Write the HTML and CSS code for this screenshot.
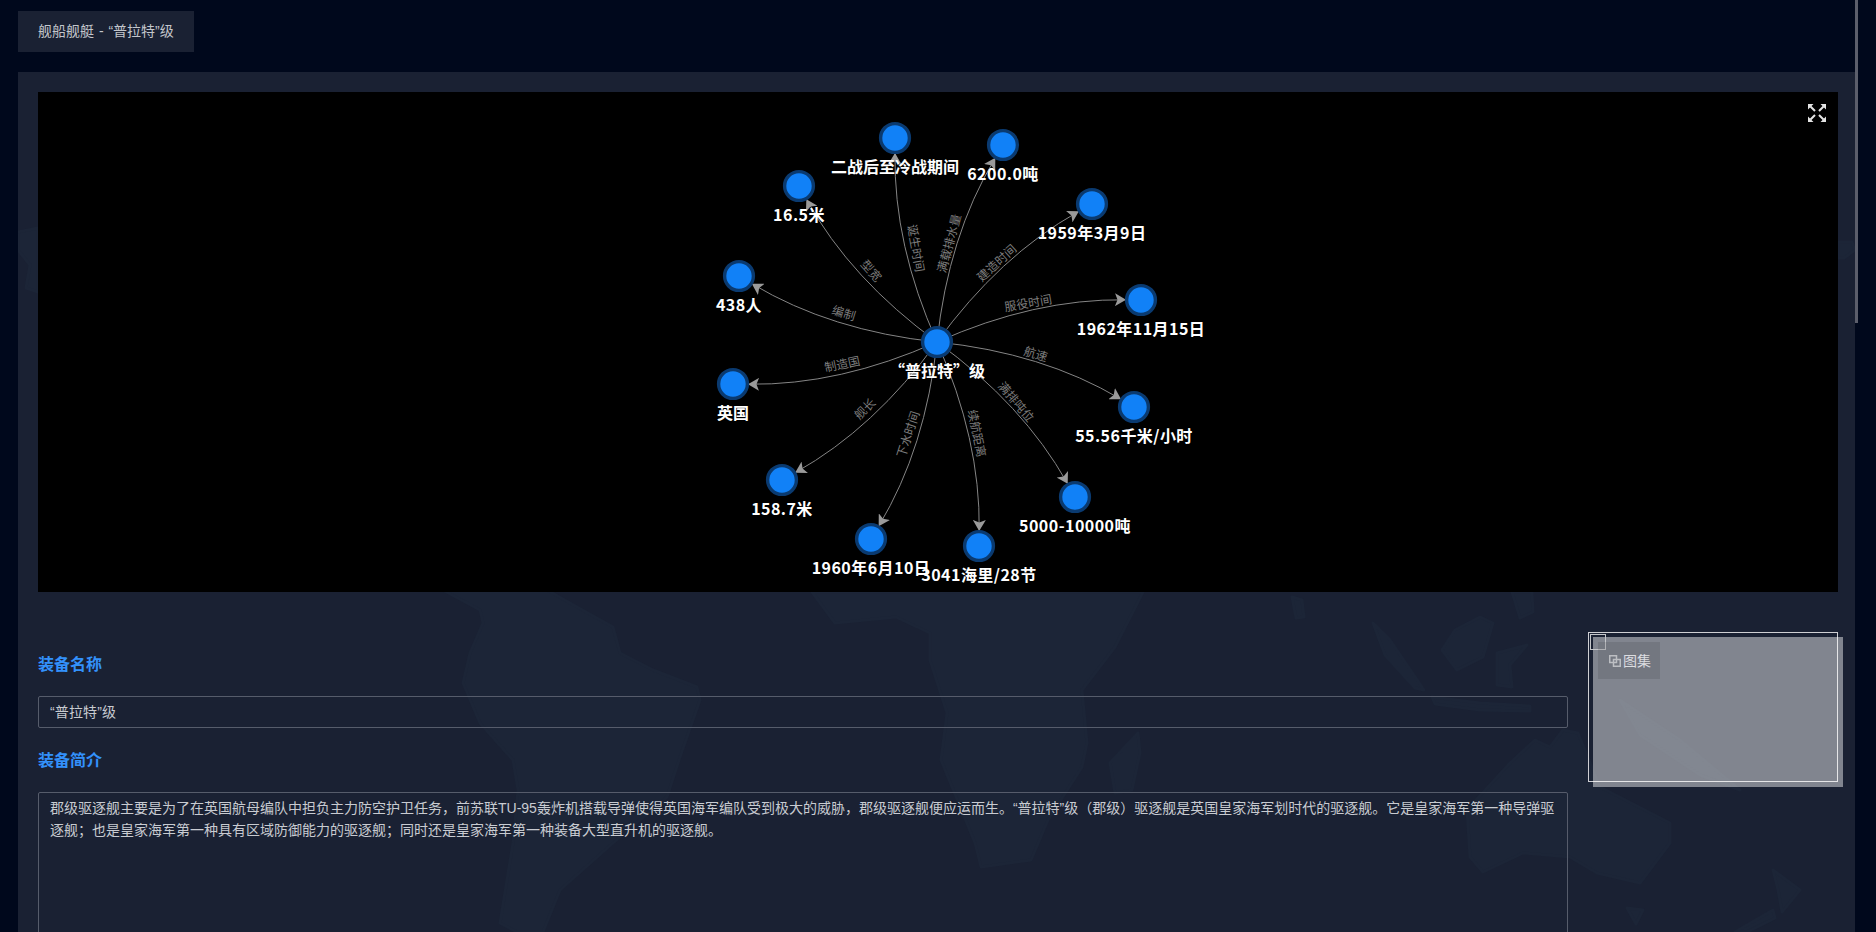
FILE: index.html
```html
<!DOCTYPE html>
<html lang="zh-CN">
<head>
<meta charset="utf-8">
<title>舰船舰艇 - “普拉特”级</title>
<link rel="stylesheet" href="styles.css">
</head>
<body>
<div class="page">
  <nav class="tabs"><div class="tab">舰船舰艇 - “普拉特”级</div></nav>
  <main class="panel">
    <svg class="worldmap" viewBox="0 0 1837 860" aria-hidden="true">
      <g transform="translate(-18 -72)">
        <path d="M443 590L480 610 483 623 470 653 463 683 480 723 513 760 518 790 513 843 500 923 517 932 543 932 560 890 613 843 667 797 680 757 700 700 697 687 653 670 620 653 613 627 577 607 547 590Z"/>
        <path d="M812 592L835 623 896 617 930 633 930 660 947 713 941 760 975 843 981 867 1031 860 1048 820 1082 767 1087 743 1082 690 1115 647 1143 592Z"/>
        <path d="M1138 733L1110 763 1115 793 1132 790 1140 753Z"/>
        <path d="M1292 597L1302 600 1304 617 1296 618Z"/>
        <path d="M1373 623L1390 640 1424 690 1415 688 1385 655Z"/>
        <path d="M1480 617L1493 623 1483 657 1457 670 1442 650 1455 630Z"/>
        <path d="M1512 592L1532 592 1533 612 1520 618Z"/>
        <path d="M1497 653L1527 645 1510 665 1512 687 1497 685Z"/>
        <path d="M1432 697L1480 703 1530 706 1530 711 1480 710 1435 704Z"/>
        <path d="M1467 810L1510 763 1535 740 1550 747 1563 730 1578 733 1600 787 1670 823 1670 843 1640 883 1597 873 1570 857 1523 853 1483 872 1470 857Z"/>
        <path d="M1627 908L1643 910 1636 924Z"/>
        <path d="M1773 870L1800 890 1782 912 1778 890Z"/>
        <path d="M1773 910L1775 918 1747 932 1735 932Z"/>
        <path d="M1620 700L1680 740 1740 790 1700 775 1640 735Z"/>
        <path d="M18 232L38 228 38 292 26 288 30 265 18 250Z"/>
        <path d="M1838 242L1852 242 1855 250 1844 258 1838 258Z"/>
      </g>
    </svg>
    <section class="chart">
      <svg class="graph" viewBox="38 92 1800 500">
        <defs>
          <marker id="arrow" class="arrow" markerUnits="userSpaceOnUse" markerWidth="11" markerHeight="13" viewBox="0 0 11 13" refX="10" refY="6.500" orient="auto">
            <path d="M0 0L11 6.500L0 13L2.500 6.500Z"/>
          </marker>
        </defs>
        <g class="edges">
          <path marker-end="url(#arrow)" d="M937 342Q893.6 244.6 895 154"/>
          <path marker-end="url(#arrow)" d="M937 342Q948.3 236.2 994.8 158.7"/>
          <path marker-end="url(#arrow)" d="M937 342Q850.8 279.2 806.8 200"/>
          <path marker-end="url(#arrow)" d="M937 342Q999.3 256 1078 211.8"/>
          <path marker-end="url(#arrow)" d="M937 342Q830.7 330.8 752.7 284.2"/>
          <path marker-end="url(#arrow)" d="M937 342Q1034.4 298.6 1125 299.8"/>
          <path marker-end="url(#arrow)" d="M937 342Q1042.7 352.8 1120.2 398.8"/>
          <path marker-end="url(#arrow)" d="M937 342Q1023 404.3 1067.2 483"/>
          <path marker-end="url(#arrow)" d="M937 342Q980.4 439.4 979.2 530"/>
          <path marker-end="url(#arrow)" d="M937 342Q925.7 447.8 879.2 525.3"/>
          <path marker-end="url(#arrow)" d="M937 342Q874.7 428 796 472.2"/>
          <path marker-end="url(#arrow)" d="M937 342Q839.6 385.4 749 384.2"/>
        </g>
        <g class="edge-labels">
          <text transform="translate(844 312) rotate(17)">编制</text>
          <text transform="translate(872 270) rotate(48)">型宽</text>
          <text transform="translate(917 248) rotate(80)">诞生时间</text>
          <text transform="translate(948 243) rotate(-75)">满载排水量</text>
          <text transform="translate(996 262) rotate(-42)">建造时间</text>
          <text transform="translate(1028 302) rotate(-10)">服役时间</text>
          <text transform="translate(1036 353) rotate(17)">航速</text>
          <text transform="translate(1017 401) rotate(50)">满排吨位</text>
          <text transform="translate(978 433) rotate(78)">续航距离</text>
          <text transform="translate(907 434) rotate(-72)">下水时间</text>
          <text transform="translate(864 408) rotate(-45)">舰长</text>
          <text transform="translate(842 363) rotate(-12)">制造国</text>
        </g>
        <g class="nodes">
          <circle cx="895" cy="138" r="14.4"/>
          <circle cx="1003" cy="145" r="14.4"/>
          <circle cx="799" cy="186" r="14.4"/>
          <circle cx="1092" cy="204" r="14.4"/>
          <circle cx="739" cy="276" r="14.4"/>
          <circle cx="1141" cy="300" r="14.4"/>
          <circle cx="1134" cy="407" r="14.4"/>
          <circle cx="1075" cy="497" r="14.4"/>
          <circle cx="979" cy="546" r="14.4"/>
          <circle cx="871" cy="539" r="14.4"/>
          <circle cx="782" cy="480" r="14.4"/>
          <circle cx="733" cy="384" r="14.4"/>
          <circle cx="937" cy="342" r="14.4"/>
        </g>
        <g class="node-labels">
          <text x="895" y="166">二战后至冷战期间</text>
          <text class="num" x="1003" y="172.500">6200.0吨</text>
          <text class="num" x="799" y="213.500">16.5米</text>
          <text class="num" x="1092" y="231.500">1959年3月9日</text>
          <text class="num" x="739" y="303.500">438人</text>
          <text class="num" x="1141" y="327.500">1962年11月15日</text>
          <text class="num" x="1134" y="434.500">55.56千米/小时</text>
          <text class="num" x="1075" y="524.500">5000-10000吨</text>
          <text class="num" x="979" y="573.500">3041海里/28节</text>
          <text class="num" x="871" y="566.500">1960年6月10日</text>
          <text class="num" x="782" y="507.500">158.7米</text>
          <text x="733" y="412">英国</text>
          <text x="937" y="370">“普拉特”级</text>
        </g>
      </svg>
      <button class="fullscreen" type="button" aria-label="全屏">
        <svg viewBox="0 0 18 18" width="18" height="18">
          <path class="fs-head" d="M0 0H5.500L0 5.500ZM18 0V5.500L12.500 0ZM0 18V12.500L5.500 18ZM18 18H12.500L18 12.500Z"/>
          <path class="fs-line" d="M2.500 2.500L7 7M15.500 2.500L11 7M2.500 15.500L7 11M15.500 15.500L11 11"/>
        </svg>
      </button>
    </section>
    <section class="detail">
      <div class="fields">
        <h3 class="field-title">装备名称</h3>
        <div class="input">“普拉特”级</div>
        <h3 class="field-title">装备简介</h3>
        <div class="textarea">郡级驱逐舰主要是为了在英国航母编队中担负主力防空护卫任务，前苏联TU-95轰炸机搭载导弹使得英国海军编队受到极大的威胁，郡级驱逐舰便应运而生。“普拉特”级（郡级）驱逐舰是英国皇家海军划时代的驱逐舰。它是皇家海军第一种导弹驱逐舰；也是皇家海军第一种具有区域防御能力的驱逐舰；同时还是皇家海军第一种装备大型直升机的驱逐舰。</div>
      </div>
      <aside class="gallery">
        <div class="gallery-fill"></div>
        <div class="gallery-check"></div>
        <button class="gallery-btn" type="button">
          <svg class="copy-icon" viewBox="0 0 12 12" width="12" height="12">
            <path d="M.75.75H7.500V7.500H.75ZM4.500 4.500H11.250V11.250H4.500Z"/>
          </svg>图集
        </button>
      </aside>
    </section>
  </main>
  <div class="scroll-thumb"></div>
</div>
</body>
</html>
```
FILE: styles.css
```css
* { box-sizing: border-box; }
html, body { margin: 0; padding: 0; height: 100%; overflow: hidden; }
body {
  background: #00081c;
  color: #c8cbd1;
  font: 14px/22px "Liberation Sans", "Noto Sans CJK SC", sans-serif;
}
.page { position: relative; height: 932px; overflow: hidden; padding: 11px 21px 0 18px; }
.tabs { display: flex; }
.tab { width: 176px; height: 41px; padding: 0 20px; line-height: 41px; background: #1a2133; color: #c3c6cc; white-space: nowrap; word-spacing: 1px; }
.panel { position: relative; margin-top: 20px; padding: 20px 17px 20px 20px; height: 900px; background: #1a2133; overflow: hidden; }
.worldmap { position: absolute; left: 0; top: 0; width: 1837px; height: 860px; }
.worldmap path { fill: #1c2537; stroke: #1c2537; stroke-width: 3; stroke-linejoin: round; }

.chart { position: relative; height: 500px; background: #000; }
.graph { display: block; width: 1800px; height: 500px; font-family: "Noto Sans CJK SC", sans-serif; }
.edges path { fill: none; stroke: #858585; stroke-width: 1; }
.arrow path { fill: #9a9a9a; }
.edge-labels text { fill: #7c7c7c; font-size: 12px; text-anchor: middle; dominant-baseline: central; }
.nodes circle { fill: #1181f7; stroke: #0a3a70; stroke-width: 3.4; }
.node-labels text { fill: #fff; font-size: 16px; font-weight: 700; text-anchor: middle; dominant-baseline: central; }
.node-labels .num { letter-spacing: .45px; }
.fullscreen { position: absolute; top: 12px; right: 12px; width: 18px; height: 18px; padding: 0; border: 0; background: none; display: block; }
.fullscreen svg { display: block; }
.fs-head { fill: #e4e4e4; }
.fs-line { stroke: #e4e4e4; stroke-width: 2; fill: none; }

.detail { position: relative; display: flex; gap: 20px; padding-top: 40px; }
.fields { width: 1530px; padding-top: 20px; }
.field-title { margin: 0 0 19px; font-size: 16px; line-height: 25px; font-weight: 700; color: #3391fb; }
.input { height: 32px; margin-bottom: 20px; padding: 4px 11px; border: 1px solid #565c6b; border-radius: 2px; line-height: 22px; letter-spacing: .15px; }
.textarea { height: 300px; padding: 4px 11px; border: 1px solid #565c6b; border-radius: 2px; line-height: 22px; }

.gallery { position: relative; width: 250px; height: 150px; border: 1px solid #cfd0d4; }
.gallery-fill { position: absolute; left: 4px; top: 4px; width: 250px; height: 150px; background: rgba(255, 255, 255, .45); }
.gallery-check { position: absolute; left: 1px; top: 1px; width: 16px; height: 16px; border: 1px solid #c4c6ca; }
.gallery-btn { position: absolute; left: 9px; top: 9px; width: 62px; height: 37px; padding: 0 0 0 11px; display: flex; align-items: center; gap: 2px; border: 0; background: rgba(0, 0, 0, .1); color: #dcdde0; font: inherit; white-space: nowrap; }
.copy-icon path { fill: none; stroke: #bcbec2; stroke-width: 1.5; }
.scroll-thumb { position: absolute; left: 1855px; top: 0; width: 3px; height: 323px; background: #5b5e6b; }
```
